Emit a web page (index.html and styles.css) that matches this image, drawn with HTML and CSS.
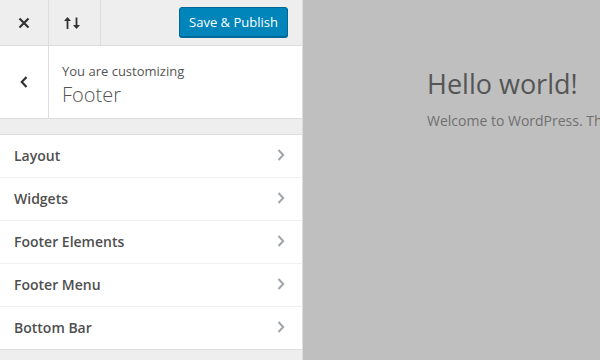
FILE: index.html
```html
<!DOCTYPE html>
<html>
<head>
<meta charset="utf-8">
<link rel="stylesheet" href="styles.css">
</head>
<body>
<div class="app">
  <aside class="sidebar">
    <header class="topbar">
      <button class="tb-btn close" aria-label="Close">
        <svg width="14" height="14" viewBox="0 0 14 14"><path d="M2.5 2.5 L11.5 11.5 M11.5 2.5 L2.5 11.5" stroke="#333" stroke-width="2.2" stroke-linecap="butt"/></svg>
      </button>
      <button class="tb-btn reorder" aria-label="Reorder">
        <svg width="18" height="16" viewBox="0 0 18 16"><path d="M4.5 14 V5" stroke="#333" stroke-width="1.8" fill="none"/><path d="M1 6 L4.5 2 L8 6 Z" fill="#333"/><path d="M13.5 2.5 V11" stroke="#333" stroke-width="1.8" fill="none"/><path d="M10 10 L13.5 14 L17 10 Z" fill="#333"/></svg>
      </button>
      <div class="spacer"></div>
      <button class="publish">Save &amp; Publish</button>
    </header>
    <div class="section-head">
      <button class="back" aria-label="Back">
        <svg width="10" height="14" viewBox="0 0 10 14"><path d="M7.5 2 L2.8 7 L7.5 12" stroke="#333" stroke-width="2.2" fill="none"/></svg>
      </button>
      <div class="title">
        <span class="sub">You are customizing</span>
        <span class="name">Footer</span>
      </div>
    </div>
    <ul class="panels">
      <li><span>Layout</span><svg class="chev" width="10" height="14" viewBox="0 0 10 14"><path d="M2.5 2 L7.2 7 L2.5 12" stroke="#a0a5aa" stroke-width="2" fill="none"/></svg></li>
      <li><span>Widgets</span><svg class="chev" width="10" height="14" viewBox="0 0 10 14"><path d="M2.5 2 L7.2 7 L2.5 12" stroke="#a0a5aa" stroke-width="2" fill="none"/></svg></li>
      <li><span>Footer Elements</span><svg class="chev" width="10" height="14" viewBox="0 0 10 14"><path d="M2.5 2 L7.2 7 L2.5 12" stroke="#a0a5aa" stroke-width="2" fill="none"/></svg></li>
      <li><span>Footer Menu</span><svg class="chev" width="10" height="14" viewBox="0 0 10 14"><path d="M2.5 2 L7.2 7 L2.5 12" stroke="#a0a5aa" stroke-width="2" fill="none"/></svg></li>
      <li><span>Bottom Bar</span><svg class="chev" width="10" height="14" viewBox="0 0 10 14"><path d="M2.5 2 L7.2 7 L2.5 12" stroke="#a0a5aa" stroke-width="2" fill="none"/></svg></li>
    </ul>
  </aside>
  <main class="preview">
    <h1>Hello world!</h1>
    <p>Welcome to WordPress. This is your first post.</p>
  </main>
</div>
</body>
</html>
```
FILE: styles.css
```css
* { box-sizing: border-box; }
html, body { margin: 0; padding: 0; }
body {
  width: 600px;
  height: 360px;
  overflow: hidden;
  font-family: "Open Sans", "Noto Sans", sans-serif;
  color: #555;
}
.app {
  display: flex;
  height: 360px;
}
.sidebar {
  width: 303px;
  flex: none;
  background: #eee;
  border-right: 1px solid #ddd;
  display: flex;
  flex-direction: column;
}
.topbar {
  height: 46px;
  display: flex;
  align-items: stretch;
  border-bottom: 1px solid #ddd;
  background: #eee;
}
.tb-btn {
  border: 0;
  background: transparent;
  padding: 0;
  display: flex;
  align-items: center;
  justify-content: center;
  border-right: 1px solid #ddd;
  cursor: pointer;
}
.close { width: 49px; }
.reorder { width: 52px; padding-right: 6px; }
.spacer { flex: 1; }
.publish {
  align-self: center;
  margin-right: 14px;
  margin-top: -1px;
  width: 109px;
  height: 30px;
  border: 1px solid #006799;
  border-radius: 3px;
  background: #0085ba;
  color: #fff;
  font-family: "Open Sans", "Noto Sans", sans-serif;
  font-size: 13px;
  padding: 0;
  box-shadow: 0 1px 0 #006799;
}
.section-head {
  height: 73px;
  background: #fff;
  display: flex;
  border-bottom: 1px solid #ddd;
}
.back {
  width: 49px;
  border: 0;
  border-right: 1px solid #ddd;
  background: transparent;
  padding: 0;
  display: flex;
  align-items: center;
  justify-content: center;
}
.title {
  display: flex;
  flex-direction: column;
  padding: 16px 0 0 13px;
}
.sub {
  font-size: 13px;
  line-height: 18px;
  color: #555;
}
.name {
  font-size: 20px;
  font-weight: 300;
  line-height: 30px;
  color: #555;
}
.panels {
  list-style: none;
  margin: 15px 0 0 0;
  padding: 0;
  border-top: 1px solid #ddd;
  background: #fff;
}
.panels li {
  height: 43px;
  display: flex;
  align-items: center;
  justify-content: space-between;
  padding: 0 16px 2px 14px;
  border-bottom: 1px solid #f0f0f0;
  font-size: 14px;
  font-weight: 600;
  color: #4f4f4f;
}
.panels li:last-child { border-bottom-color: #ddd; }
.preview {
  flex: 1;
  background: #bfbfbf;
  padding: 64px 0 0 124px;
  overflow: hidden;
  white-space: nowrap;
}
.preview h1 {
  margin: 0;
  font-size: 27px;
  font-weight: 400;
  line-height: 40px;
  color: #555;
}
.preview p {
  margin: 7px 0 0 0;
  font-size: 14px;
  line-height: 20px;
  color: #707070;
}
```
